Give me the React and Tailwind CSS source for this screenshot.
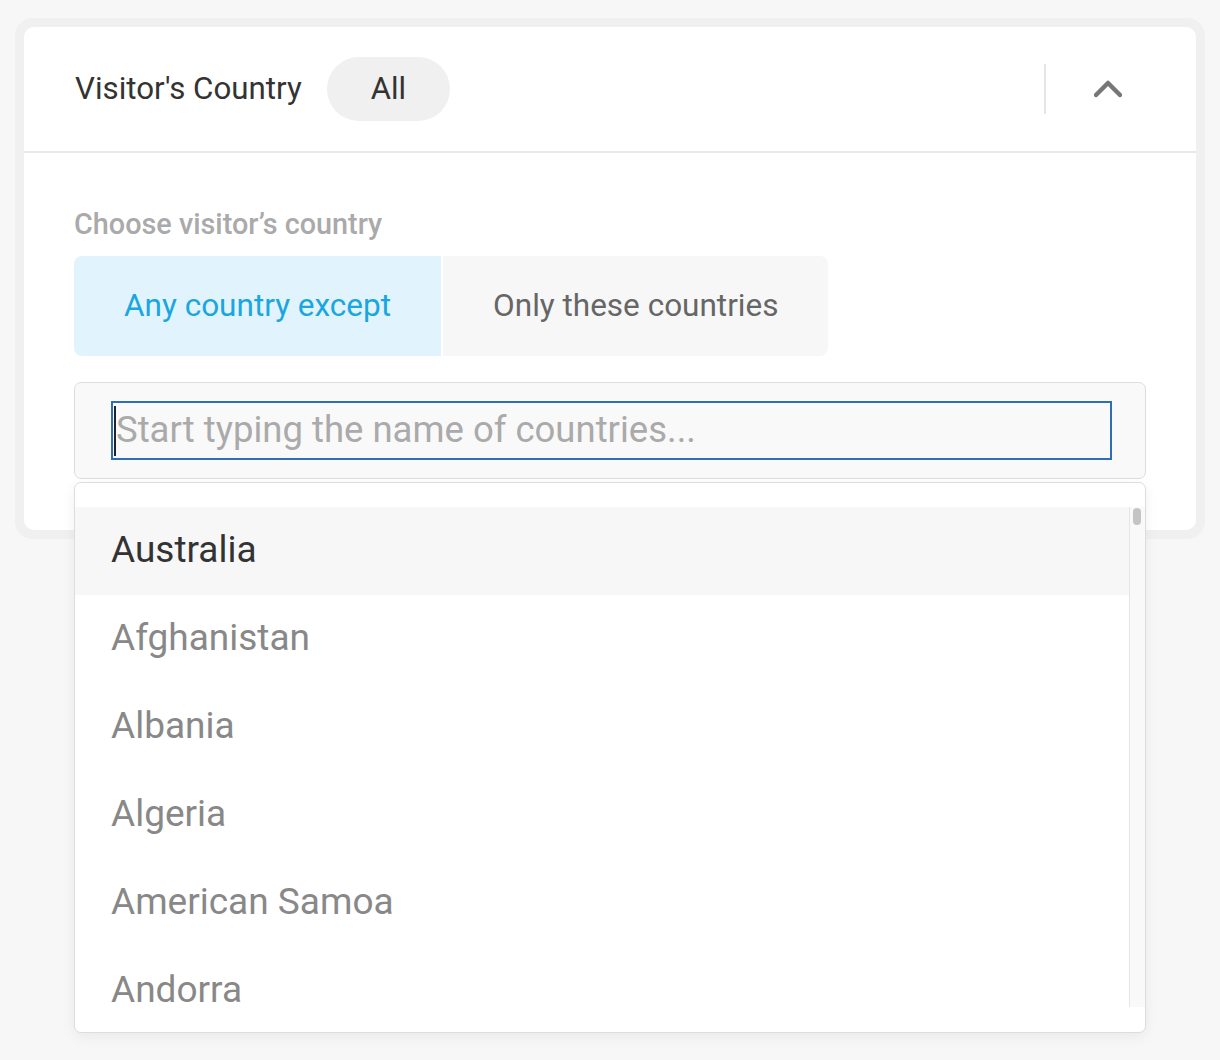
const countries = ['Australia', 'Afghanistan', 'Albania', 'Algeria', 'American Samoa', 'Andorra'];

const ChevronUp = () => (
  <svg width="28" height="18" viewBox="0 0 28 18" fill="none">
    <polyline points="2,15 14,3 26,15" stroke="#777777" strokeWidth="4.5" strokeLinecap="round" strokeLinejoin="round" />
  </svg>
);

const CountryDropdown = () => {
  return (
    <div className="absolute left-0 right-0 top-[calc(100%+3px)] z-10 flex flex-col rounded-[7px] border border-[#dddddd] bg-white pt-[24px] pb-[25px] shadow-[0_4px_14px_rgba(0,0,0,0.06)]">
      <div className="flex h-[500px] overflow-hidden">
        <ul className="flex-1">
          {countries.map((c, i) => (
            <li
              key={c}
              className={
                i === 0
                  ? 'flex h-[88px] items-center bg-[#f7f7f7] pb-[4px] pl-[36px] text-[37px] leading-none text-[#333333]'
                  : 'flex h-[88px] items-center pb-[4px] pl-[36px] text-[37px] leading-none text-[#888888]'
              }
            >
              {c}
            </li>
          ))}
        </ul>
        <div className="w-[16px] border-l border-[#e6e6e6] bg-[#f9f9f9] pt-[1px]">
          <div className="ml-[3px] h-[17px] w-[8px] rounded-full bg-[#c4c4c4]" />
        </div>
      </div>
    </div>
  );
};

export default function App() {
  return (
    <div className="min-h-[1060px] bg-[#f7f7f7] pl-[15px] pt-[18px]" style={{ fontFamily: 'Roboto, "Liberation Sans", sans-serif' }}>
      <div className="w-[1190px] rounded-[18px] bg-[#f0f0f0] p-[9px]">
        <div className="rounded-[10px] bg-white">
          <div className="flex h-[126px] items-center border-b-2 border-[#e8e8e8] pl-[51px] pr-[74px]">
            <h2 className="text-[31.3px] text-[#333333]">Visitor's Country</h2>
            <span className="ml-[25px] flex h-[64px] items-center rounded-full bg-[#f0f0f0] px-[44px] text-[31px] text-[#333333]">All</span>
            <div className="ml-auto mr-[48px] h-[50px] w-[2px] bg-[#e5e5e5]" />
            <ChevronUp />
          </div>

          <div className="px-[50px] pt-[54px] pb-[51px]">
            <p className="mb-[15px] text-[28.8px] font-medium leading-[34px] text-[#aaaaaa]">Choose visitor’s country</p>
            <div className="flex gap-[2px]">
              <button className="flex h-[100px] items-center rounded-l-[8px] bg-[#e1f4fd] px-[50px] text-[31.5px] text-[#1aa6e0]">Any country except</button>
              <button className="flex h-[100px] items-center rounded-r-[8px] bg-[#f7f7f7] px-[50px] text-[31.5px] text-[#666666]">Only these countries</button>
            </div>

            <div className="relative mt-[26px]">
              <div className="rounded-[7px] border border-[#dddddd] bg-[#f9f9f9] pl-[36px] pr-[33px] pt-[18px] pb-[18px]">
                <div className="flex h-[59px] items-center border-2 border-[#2c70b3]">
                  <span className="ml-[1px] h-[50px] w-[2px] bg-[#222222]" />
                  <span className="text-[36.5px] text-[#aaaaaa]">Start typing the name of countries...</span>
                </div>
              </div>
              <CountryDropdown />
            </div>
          </div>
        </div>
      </div>
    </div>
  );
}
